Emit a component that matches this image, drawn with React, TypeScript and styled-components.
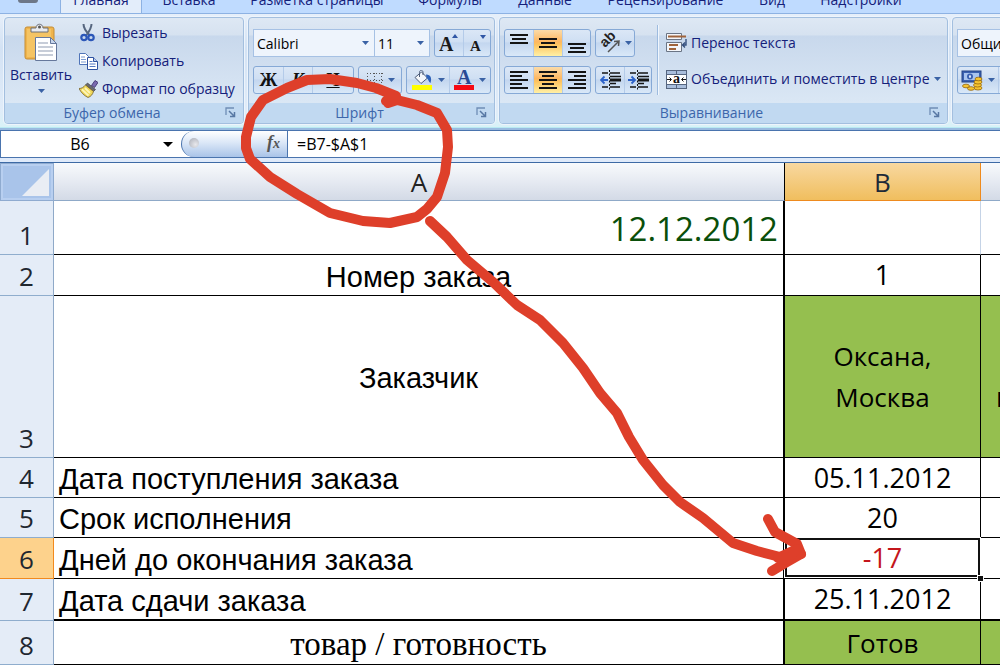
import React from "react";
import styled, { createGlobalStyle, css } from "styled-components";

const UI_FONT = '"Open Sans", "Noto Sans", sans-serif';

const GlobalStyle = createGlobalStyle`
  *, *::before, *::after { box-sizing: border-box; }
  html, body, #root { height: 100%; }
  body {
    margin: 0;
    background: #fff;
    font-family: ${UI_FONT};
    font-size: 14px;
    color: #14207a;
  }
  button, input, select { font: inherit; color: inherit; margin: 0; }
`;

const Window = styled.div`
  position: relative;
  min-height: 100%;
  overflow: hidden;
`;

/* ---------- Tabs ---------- */

const TabBar = styled.nav`
  display: flex;
  align-items: flex-end;
  height: 14px;
  padding-left: 18px;
  overflow: hidden;
  background: #bfdbff;
  border-bottom: 1px solid #8db2e3;
`;

const OfficeButton = styled.button`
  align-self: flex-start;
  width: 20px;
  height: 3px;
  padding: 0;
  border: 0;
  border-radius: 0 0 10px 10px;
  background: #6d7788;
`;

const Tab = styled.button<{ $active?: boolean; $width: number }>`
  width: ${(p) => p.$width}px;
  height: 24px;
  margin-bottom: -1px;
  padding: 0 0 5px;
  border: 1px solid transparent;
  border-bottom: 0;
  background: transparent;
  line-height: 18px;
  white-space: nowrap;
  ${(p) =>
    p.$active &&
    css`
      margin-left: 22px;
      background: #e3edfa;
      border-color: #8db2e3;
    `}
`;

/* ---------- Ribbon ---------- */

const Ribbon = styled.div`
  display: flex;
  gap: 4px;
  height: 114px;
  padding: 3px 0 3px 4px;
  overflow: hidden;
  background: linear-gradient(#e6effa, #d3e2f4 30%, #e0ecf9 85%, #d8f2f7);
  border-bottom: 1px solid #b9eaf2;
`;

const Group = styled.section<{ $width: number }>`
  display: flex;
  flex-direction: column;
  flex: none;
  width: ${(p) => p.$width}px;
  border: 1px solid #a3bfdf;
  border-radius: 4px;
  overflow: hidden;
  box-shadow: 0 0 0 1px #edf4fc;
  background: linear-gradient(#dee8f4 0, #d6e2f0 17px, #c8d8ec 18px, #d9e6f4 80px, #dfecf8 100%);
`;

const GroupBody = styled.div<{ $pad: string }>`
  display: flex;
  flex: 1;
  min-height: 0;
  padding: ${(p) => p.$pad};
`;

const GroupFooter = styled.div`
  display: grid;
  grid-template-columns: 1fr 24px;
  align-items: center;
  height: 20px;
  background: #c1d9f1;
  color: #3c66ab;
  line-height: 18px;
`;

const GroupTitle = styled.h2`
  margin: 0;
  font-size: 14px;
  font-weight: 400;
  text-align: center;
`;

const Launcher = styled.button`
  justify-self: center;
  width: 12px;
  height: 16px;
  padding: 0;
  border: 0;
  background: none;
  svg { display: block; }
`;

const PasteButton = styled.button`
  display: flex;
  flex-direction: column;
  align-items: center;
  width: 68px;
  margin-right: 4px;
  padding: 0;
  border: 0;
  background: none;
  line-height: 18px;
  svg + span { margin-top: 4px; }
  span + svg { margin-top: 5px; }
`;

const CommandList = styled.div<{ $gap: number; $drop?: boolean }>`
  display: flex;
  flex-direction: column;
  gap: ${(p) => p.$gap}px;
  padding-top: ${(p) => (p.$drop ? 4 : 0)}px;
`;

const Command = styled.button`
  display: flex;
  align-items: center;
  gap: 4px;
  height: 20px;
  padding: 0;
  border: 0;
  background: none;
  line-height: 20px;
  white-space: nowrap;
`;

const Rows = styled.div`
  display: flex;
  flex-direction: column;
  gap: 9px;
`;

const Row = styled.div`
  display: flex;
  gap: 4px;
`;

const SelectBox = styled.label<{ $width: number }>`
  display: grid;
  align-items: center;
  width: ${(p) => p.$width}px;
  height: 28px;
  border: 1px solid #a6c1e4;
  background: #eef4fc;
  & + & { margin-left: -5px; }
  select {
    grid-area: 1 / 1;
    width: 100%;
    height: 26px;
    padding: 0 3px;
    border: 0;
    background: transparent;
    appearance: none;
    color: #000;
  }
  svg {
    grid-area: 1 / 1;
    justify-self: end;
    margin-right: 5px;
    pointer-events: none;
  }
`;

const Cluster = styled.div`
  display: flex;
  height: 28px;
  border: 1px solid #86a9d6;
  border-radius: 3px;
  overflow: hidden;
  background: linear-gradient(#dbe7f6, #cfdff3 45%, #c3d6ef 50%, #d9e8f8);
`;

const Tool = styled.button<{ $width: number; $on?: boolean }>`
  display: flex;
  align-items: center;
  justify-content: center;
  gap: 5px;
  width: ${(p) => p.$width}px;
  padding: 0;
  border: 0;
  border-left: 1px solid #b4cbe9;
  background: ${(p) =>
    p.$on ? "linear-gradient(#fbdba8, #fdb761 45%, #fdc35f 55%, #fff0a6)" : "transparent"};
  &:first-child { border-left: 0; }
`;

const Letter = styled.span<{ $italic?: boolean; $underline?: boolean }>`
  font-family: "Liberation Serif", serif;
  font-size: 18px;
  font-weight: 700;
  line-height: 22px;
  color: #111;
  font-style: ${(p) => (p.$italic ? "italic" : "normal")};
  text-decoration: ${(p) => (p.$underline ? "underline" : "none")};
`;

const Divider = styled.div`
  width: 2px;
  height: 70px;
  margin: -4px 7px 0 5px;
  background: #9dbbdf;
  border-right: 1px solid #f0f6fd;
`;

/* ---------- Formula bar ---------- */

const FormulaBar = styled.div`
  display: flex;
  height: 35px;
  padding-bottom: 4px;
  background: #dfeafa;
  border-top: 2px solid #9bbbe0;
  border-bottom: 1px solid #3d6aa5;
`;

const FormulaRow = styled.div`
  display: flex;
  flex: 1;
  border-top: 1px solid #4a74ae;
  border-bottom: 1px solid #4a74ae;
  border-left: 1px solid #4a74ae;
  background: #fff;
  color: #000;
  font-size: 16px;
  input {
    border: 0;
    padding: 0;
    background: transparent;
    outline: 0;
  }
`;

const NameBox = styled.div`
  display: flex;
  width: 180px;
  input { width: 158px; text-align: center; }
  button {
    display: flex;
    align-items: center;
    justify-content: center;
    width: 18px;
    padding: 0;
    border: 0;
    background: none;
  }
`;

const FxCapsule = styled.div`
  display: flex;
  align-items: center;
  justify-content: space-between;
  width: 107px;
  padding: 0 5px;
  border-left: 1px solid #4a74ae;
  border-right: 1px solid #4a74ae;
  border-radius: 13px 0 0 13px;
  background: linear-gradient(#fff, #dbe7f7 45%, #a9c3e8);
  button {
    padding: 0 2px 2px;
    border: 0;
    background: none;
    font: italic 700 18px/20px "Liberation Serif", serif;
    color: #555;
  }
  small { font-size: 14px; }
`;

const Knob = styled.span`
  width: 10px;
  height: 10px;
  margin: 0 0 3px 2px;
  border-radius: 50%;
  background: radial-gradient(circle at 65% 65%, #e8e8ec, #a7abb5);
`;

const FormulaInput = styled.input`
  flex: 1;
  min-width: 0;
  && { padding-left: 9px; }
`;

/* ---------- Sheet ---------- */

const Sheet = styled.table`
  width: 100%;
  table-layout: fixed;
  border-collapse: separate;
  border-spacing: 0;
  color: #000;
  font-size: 27px;
  th, td { padding: 0; font-weight: 400; overflow: hidden; white-space: nowrap; }
`;

const ColHead = styled.th<{ $selected?: boolean; $edge?: boolean }>`
  height: 38px;
  line-height: 36px;
  color: #222;
  font-size: 26px;
  background: linear-gradient(#f8fafc, #e6eaf2 50%, #d3dae6);
  border-bottom: 1px solid #8fa9c8;
  ${(p) => p.$edge && css`border-right: 1px solid #000;`}
  ${(p) =>
    p.$selected &&
    css`
      background: linear-gradient(#f8d8a0, #f0be5e);
      color: #1d2a38;
      border-bottom-color: #ee8a1e;
      border-right: 1px solid #ee8a1e;
    `}
`;

const Corner = styled.th`
  background: #a9c4ea;
  border: 1px solid #8fabd0;
  box-shadow: inset 0 0 0 2px #b8cff0;
  svg { display: block; margin-left: auto; margin-right: 4px; }
`;

const RowHead = styled.th<{ $selected?: boolean }>`
  vertical-align: bottom;
  line-height: 38px;
  font-size: 26px;
  color: #1f2730;
  background: ${(p) => (p.$selected ? "#fdd28c" : "#e4ecf7")};
  border-right: 1px solid ${(p) => (p.$selected ? "#f28a1e" : "#8fa9c8")};
  border-bottom: 1px solid ${(p) => (p.$selected ? "#f28a1e" : "#8fadcd")};
`;

const SheetRow = styled.tr<{ $height: number }>`
  height: ${(p) => p.$height}px;
`;

const cellBorder = css<{ $thick?: boolean }>`
  border-bottom: ${(p) => (p.$thick ? 2 : 1)}px solid #000;
`;

const CellA = styled.td<{ $kind?: "date" | "center" | "serif"; $thick?: boolean }>`
  ${cellBorder}
  border-right: 2px solid #000;
  && { padding: 3px 5px 0; }
  font-family: "Liberation Sans", sans-serif;
  font-size: 29px;
  line-height: 36px;
  ${(p) => (p.$kind === "center" || p.$kind === "serif") && css`text-align: center;`}
  ${(p) => p.$kind === "serif" && css`font-family: "Liberation Serif", serif; font-size: 33px;`}
  ${(p) =>
    p.$kind === "date" &&
    css`
      text-align: right;
      font-family: ${UI_FONT};
      font-size: 33px;
      color: #0a4f0a;
    `}
`;

const CellB = styled.td<{ $green?: boolean; $open?: boolean; $active?: boolean; $thick?: boolean }>`
  ${cellBorder}
  border-right: 1px solid ${(p) => (p.$open ? "#c5d3e6" : "#000")};
  background: ${(p) => (p.$green ? "#95bf4f" : "#fff")};
  font-size: ${(p) => (p.$green ? 26 : 27)}px;
  text-align: center;
  line-height: 38px;
  && { white-space: pre-line; }
  ${(p) =>
    p.$active &&
    css`
      && { overflow: visible; }
      position: relative;
      color: #c4161c;
      &::before {
        content: "";
        position: absolute;
        inset: 0 0 1px 0;
        border: 2px solid #111;
        outline: 1px solid #fff;
      }
      &::after {
        content: "";
        position: absolute;
        right: -4px;
        bottom: -4px;
        width: 7px;
        height: 7px;
        border: 1px solid #fff;
        background: #111;
      }
    `}
`;

const CellC = styled.td<{ $green?: boolean; $thick?: boolean }>`
  ${cellBorder}
  background: ${(p) => (p.$green ? "#95bf4f" : "#fff")};
  && { padding-left: 15px; white-space: pre; }
  line-height: 40px;
`;

const Multiline = styled.span`
  display: block;
  line-height: 41px;
`;

const Markup = styled.svg`
  position: absolute;
  left: 0;
  top: 0;
  pointer-events: none;
`;

/* ---------- Icons ---------- */

const Caret = ({ color = "#3a62a5", size = 7 }: { color?: string; size?: number }) => (
  <svg width={size} height={Math.ceil(size / 2)} viewBox="0 0 8 4" preserveAspectRatio="none" aria-hidden="true">
    <path d="M0 0h8L4 4z" fill={color} />
  </svg>
);

const LauncherIcon = () => (
  <svg width="11" height="12" viewBox="0 0 11 12" aria-hidden="true">
    <path d="M1 8V1h8" fill="none" stroke="#6f8db5" strokeWidth="1.3" />
    <path d="M4 4l5 5M9.5 5v4.5H5" fill="none" stroke="#5878a4" strokeWidth="1.5" />
  </svg>
);

const PasteIcon = () => (
  <svg width="34" height="39" viewBox="0 0 34 39" aria-hidden="true">
    <rect x="1" y="4" width="29" height="32" rx="2" fill="#efb44d" stroke="#c58d35" />
    <path d="M3 6h24v28H3z" fill="#f5c464" />
    <path d="M7 9V5h5c0-5 7-5 7 0h5v4z" fill="#e9ebef" stroke="#6b6f78" />
    <circle cx="15.5" cy="4" r="1.5" fill="#555" />
    <path d="M11.500 14.500h15l6 6v17h-21z" fill="#fff" stroke="#66789c" />
    <path d="M26.500 14.500v6h6z" fill="#c9d7ec" stroke="#66789c" />
    <path d="M14 20h10M14 24h15M14 28h15M14 32h15" stroke="#b5bdcb" strokeWidth="1.500" />
  </svg>
);

const CutIcon = () => (
  <svg width="19" height="18" viewBox="0 0 19 18" aria-hidden="true">
    <path d="M4.500 0c0 4 3 8 6 11M12.500 0c0 4-2 7-5 11" fill="none" stroke="#56667f" strokeWidth="2" />
    <ellipse cx="5" cy="13.500" rx="2.700" ry="2.700" fill="none" stroke="#2c57b8" strokeWidth="2.200" />
    <ellipse cx="12" cy="13.500" rx="2.700" ry="2.700" fill="none" stroke="#2c57b8" strokeWidth="2.200" />
  </svg>
);

const CopyIcon = () => (
  <svg width="19" height="18" viewBox="0 0 19 18" aria-hidden="true">
    <path d="M.5 1.500h6l3 3v8h-9z" fill="#fff" stroke="#4f74b8" />
    <path d="M2 5h4M2 7.500h5M2 10h5" stroke="#7b9bd1" />
    <path d="M8.500 5.500h6l4 4v8h-10z" fill="#fff" stroke="#2e52a0" />
    <path d="M14.500 5.500v4h4" fill="#bdd0ef" stroke="#2e52a0" />
    <path d="M10.500 9.500h3M10.500 12h6M10.500 14.500h6" stroke="#5278c2" />
  </svg>
);

const BrushIcon = () => (
  <svg width="19" height="18" viewBox="0 0 19 18" aria-hidden="true">
    <path d="M12.500 5.500l3.500-5 3 2-3.500 5z" fill="#7b6bb0" stroke="#4a3f7a" />
    <path d="M8.500 3l8 6.500-2 2-8-6.500z" fill="#6a6a70" stroke="#333" strokeWidth=".6" />
    <path d="M6.500 5C4.500 7.500 2.500 8.500 0 8.500c2 4 5 7 9 9 3-1 4.500-3 5.500-6z" fill="#efd75a" stroke="#75602a" strokeWidth=".8" />
    <path d="M3 9.500l6.500 6M6 8l5 5" stroke="#fdf5b8" strokeWidth="1.800" />
  </svg>
);

const GrowFont = ({ small }: { small?: boolean }) => (
  <svg width="20" height="22" viewBox="0 0 20 22" aria-hidden="true">
    <text
      x={small ? 3 : 0}
      y="19"
      fontFamily="Liberation Serif, serif"
      fontWeight="700"
      fontSize={small ? 15 : 20}
      fill="#1a1a1a"
    >
      A
    </text>
    <path d={small ? "M13 3h6l-3 4z" : "M13 6h6l-3-4z"} fill="#2f56a5" />
  </svg>
);

const BorderIcon = () => (
  <svg width="17" height="17" viewBox="0 0 17 17" aria-hidden="true">
    <path d="M1 1.500h16M1 8.500h16M1.500 1v15M8.500 1v15M15.500 1v15" stroke="#555" strokeDasharray="1 2" />
    <path d="M0 15.500h17" stroke="#222" strokeWidth="1.500" />
  </svg>
);

const FillIcon = () => (
  <svg width="21" height="20" viewBox="0 0 21 20" aria-hidden="true">
    <path d="M3 7.500L9.500 2l6 6-6.500 5.500z" fill="#f4f7fb" stroke="#4d5d7a" />
    <path d="M7.500 7V2.500C7.500-.5 11-.5 11 2.500V5" fill="none" stroke="#4d5d7a" />
    <path d="M14 4.500c5 0 6 4 4.500 8.500-2-1-2-4-4-5z" fill="#2f62b8" />
    <path d="M0 15h20v5H0z" fill="#ffff00" />
  </svg>
);

const FontColorIcon = () => (
  <svg width="20" height="20" viewBox="0 0 20 20" aria-hidden="true">
    <text x="3" y="14" fontFamily="Liberation Serif, serif" fontWeight="700" fontSize="20" fill="#2a4a94">
      A
    </text>
    <path d="M0 15h20v5H0z" fill="#f50a14" />
  </svg>
);

const LineIcon = ({ rows }: { rows: [number, number, number][] }) => (
  <svg width="20" height="20" viewBox="0 0 20 20" aria-hidden="true">
    {rows.map(([x, y, w]) => (
      <rect key={y} x={x} y={y} width={w} height="2" fill="#141414" />
    ))}
  </svg>
);

const spread = (start: number): [number, number, number][] => [
  [1, start, 18],
  [3, start + 4, 14],
  [1, start + 8, 18],
];

const five = (x: number): [number, number, number][] =>
  [0, 1, 2, 3, 4].map((i) => [i % 2 ? x : 1, 1 + i * 4, i % 2 ? 12 : 18] as [number, number, number]);

const OrientIcon = () => (
  <svg width="21" height="22" viewBox="0 0 21 22" aria-hidden="true">
    <text
      x="0"
      y="0"
      transform="translate(6 16) rotate(-45)"
      fontFamily="Liberation Sans, sans-serif"
      fontWeight="700"
      fontSize="14"
      fill="#222"
    >
      ab
    </text>
    <path d="M9 20L19 10M15 9.500l5-.5-.5 5" fill="none" stroke="#555" strokeWidth="1.500" />
  </svg>
);

const IndentIcon = ({ right }: { right?: boolean }) => (
  <svg width="21" height="20" viewBox="0 0 21 20" aria-hidden="true">
    <path d="M2 3h6M10 3h10M10 6.500h11M10 13.500h6M2 17h6M10 17h10" stroke="#141414" strokeWidth="1.600" />
    <path d="M10 10h11" stroke="#141414" strokeWidth="3" />
    <path d="M9.500 0v20" stroke="#141414" strokeDasharray="2 1.500" />
    <path
      d={right ? "M0 10h6M3.500 6.500L7 10l-3.500 3.500" : "M8 10H2M4.500 6.500L1 10l3.500 3.500"}
      fill="none"
      stroke="#2d62c8"
      strokeWidth="1.800"
    />
  </svg>
);

const WrapIcon = () => (
  <svg width="21" height="20" viewBox="0 0 21 20" aria-hidden="true">
    <path d="M.5.5h15v6H.5zM.5 9.500h15v9H.5z" fill="#f4f6fa" stroke="#6a7484" />
    <path d="M2 3.500h18" stroke="#a0643c" strokeWidth="2" />
    <path d="M3 12h9M3 16h7" stroke="#a0643c" strokeWidth="2" />
    <path d="M20 6v6h-3M19 9.500L16.500 12l2.500 2.500" fill="none" stroke="#35507e" strokeWidth="1.400" />
  </svg>
);

const MergeIcon = () => (
  <svg width="21" height="19" viewBox="0 0 21 19" aria-hidden="true">
    <rect x=".5" y=".5" width="20" height="18" fill="#a9bedc" stroke="#55657f" />
    <path d="M1 5h19v9H1z" fill="#fff" />
    <path d="M0 4.500h21M0 14.500h21M10.500 0v4M10.500 15v4" stroke="#55657f" />
    <text x="7" y="13" fontFamily="Liberation Serif, serif" fontWeight="700" fontSize="14" fill="#111">
      a
    </text>
    <path d="M1 9.500h4M16 9.500h4M3.500 7.500l2 2-2 2M17.500 7.500l-2 2 2 2" fill="none" stroke="#111" />
  </svg>
);

const MoneyIcon = () => (
  <svg width="22" height="21" viewBox="0 0 22 21" aria-hidden="true">
    <rect x="1" y="1" width="19" height="11" fill="#3b61b0" stroke="#244486" />
    <rect x="3" y="3" width="15" height="7" fill="#a9c4ee" />
    <ellipse cx="9" cy="6.500" rx="3" ry="3" fill="#3b61b0" />
    <ellipse cx="9" cy="6.500" rx="1" ry="1.500" fill="#dfeafc" />
    <g fill="#f5c431" stroke="#96660c" strokeWidth=".8">
      <ellipse cx="17" cy="18" rx="4" ry="2" />
      <ellipse cx="16.500" cy="15" rx="4" ry="2" />
      <ellipse cx="17" cy="12" rx="4" ry="2" />
      <ellipse cx="17.500" cy="9" rx="3.500" ry="1.800" />
      <ellipse cx="5" cy="16" rx="3.500" ry="1.800" />
      <ellipse cx="10" cy="18.500" rx="3.500" ry="1.800" />
    </g>
  </svg>
);

/* ---------- Page ---------- */

const TABS = [
  { label: "Главная", width: 82, active: true },
  { label: "Вставка", width: 94 },
  { label: "Разметка страницы", width: 162 },
  { label: "Формулы", width: 104 },
  { label: "Данные", width: 86 },
  { label: "Рецензирование", width: 155 },
  { label: "Вид", width: 58 },
  { label: "Надстройки", width: 120 },
];

type SheetLine = {
  height: number;
  a: string;
  kind?: "date" | "center" | "serif";
  b: string;
  c?: string;
  green?: boolean;
  active?: boolean;
  thick?: boolean;
};

const LINES: SheetLine[] = [
  { height: 54, a: "12.12.2012", kind: "date", b: "" },
  { height: 41, a: "Номер заказа", kind: "center", b: "1" },
  { height: 162, a: "Заказчик", kind: "center", b: "Оксана,\nМосква", c: " \nн", green: true },
  { height: 40, a: "Дата поступления заказа", b: "05.11.2012" },
  { height: 40, a: "Срок исполнения", b: "20" },
  { height: 41, a: "Дней до окончания заказа", b: "-17", active: true },
  { height: 42, a: "Дата сдачи заказа", b: "25.11.2012", thick: true },
  { height: 44, a: "товар / готовность", kind: "serif", b: "Готов", green: true },
];

const Footer = ({ title, launcher = true }: { title: string; launcher?: boolean }) => (
  <GroupFooter>
    <GroupTitle>{title}</GroupTitle>
    {launcher && (
      <Launcher aria-label={`${title}: параметры`}>
        <LauncherIcon />
      </Launcher>
    )}
  </GroupFooter>
);

const Dropdown = ({ label, value, width }: { label: string; value: string; width: number }) => (
  <SelectBox $width={width}>
    <select aria-label={label} defaultValue={value}>
      <option>{value}</option>
    </select>
    <Caret />
  </SelectBox>
);

export default function App() {
  return (
    <Window>
      <GlobalStyle />
      <TabBar>
        <OfficeButton aria-label="Office" />
        {TABS.map((t) => (
          <Tab key={t.label} $width={t.width} $active={t.active}>
            {t.label}
          </Tab>
        ))}
      </TabBar>

      <Ribbon>
        <Group $width={240}>
          <GroupBody $pad="5px 0 0 2px">
            <PasteButton>
              <PasteIcon />
              <span>Вставить</span>
              <Caret />
            </PasteButton>
            <CommandList $gap={8}>
              <Command>
                <CutIcon />
                Вырезать
              </Command>
              <Command>
                <CopyIcon />
                Копировать
              </Command>
              <Command>
                <BrushIcon />
                Формат по образцу
              </Command>
            </CommandList>
          </GroupBody>
          <Footer title="Буфер обмена" />
        </Group>

        <Group $width={247}>
          <GroupBody $pad="11px 0 0 4px">
            <Rows>
              <Row>
                <Dropdown label="Шрифт" value="Calibri" width={122} />
                <Dropdown label="Размер" value="11" width={56} />
                <Cluster>
                  <Tool $width={28} aria-label="Увеличить размер"><GrowFont /></Tool>
                  <Tool $width={27} aria-label="Уменьшить размер"><GrowFont small /></Tool>
                </Cluster>
              </Row>
              <Row>
                <Cluster>
                  <Tool $width={29}><Letter>Ж</Letter></Tool>
                  <Tool $width={29}><Letter $italic>К</Letter></Tool>
                  <Tool $width={41}><Letter $underline>Ч</Letter></Tool>
                </Cluster>
                <Cluster>
                  <Tool $width={42} aria-label="Границы"><BorderIcon /><Caret /></Tool>
                </Cluster>
                <Cluster>
                  <Tool $width={42} aria-label="Цвет заливки"><FillIcon /><Caret /></Tool>
                  <Tool $width={41} aria-label="Цвет текста"><FontColorIcon /><Caret /></Tool>
                </Cluster>
              </Row>
            </Rows>
          </GroupBody>
          <Footer title="Шрифт" />
        </Group>

        <Group $width={449}>
          <GroupBody $pad="11px 0 0 4px">
            <Rows>
              <Row>
                <Cluster>
                  <Tool $width={28} aria-label="По верхнему краю"><LineIcon rows={spread(1)} /></Tool>
                  <Tool $width={29} $on aria-label="По середине"><LineIcon rows={spread(5)} /></Tool>
                  <Tool $width={28} aria-label="По нижнему краю"><LineIcon rows={spread(10)} /></Tool>
                </Cluster>
                <Cluster>
                  <Tool $width={38} aria-label="Ориентация"><OrientIcon /><Caret /></Tool>
                </Cluster>
              </Row>
              <Row>
                <Cluster>
                  <Tool $width={28} aria-label="По левому краю"><LineIcon rows={five(1)} /></Tool>
                  <Tool $width={29} $on aria-label="По центру"><LineIcon rows={five(4)} /></Tool>
                  <Tool $width={28} aria-label="По правому краю"><LineIcon rows={five(7)} /></Tool>
                </Cluster>
                <Cluster>
                  <Tool $width={28} aria-label="Уменьшить отступ"><IndentIcon /></Tool>
                  <Tool $width={27} aria-label="Увеличить отступ"><IndentIcon right /></Tool>
                </Cluster>
              </Row>
            </Rows>
            <Divider />
            <CommandList $gap={16} $drop>
              <Command>
                <WrapIcon />
                Перенос текста
              </Command>
              <Command>
                <MergeIcon />
                Объединить и поместить в центре
                <Caret />
              </Command>
            </CommandList>
          </GroupBody>
          <Footer title="Выравнивание" />
        </Group>

        <Group $width={200}>
          <GroupBody $pad="11px 0 0 4px">
            <Rows>
              <Dropdown label="Числовой формат" value="Общий" width={160} />
              <Row>
                <Cluster>
                  <Tool $width={40} aria-label="Финансовый формат"><MoneyIcon /><Caret /></Tool>
                  <Tool $width={30}>%</Tool>
                </Cluster>
              </Row>
            </Rows>
          </GroupBody>
          <Footer title="" launcher={false} />
        </Group>
      </Ribbon>

      <FormulaBar>
        <FormulaRow>
          <NameBox>
            <input aria-label="Имя" defaultValue="B6" />
            <button aria-label="Список имён"><Caret color="#000" size={10} /></button>
          </NameBox>
          <FxCapsule>
            <Knob />
            <button aria-label="Вставить функцию">f<small>x</small></button>
          </FxCapsule>
          <FormulaInput aria-label="Строка формул" defaultValue="=B7-$A$1" />
        </FormulaRow>
      </FormulaBar>

      <Sheet>
        <colgroup>
          <col style={{ width: 54 }} />
          <col style={{ width: 731 }} />
          <col style={{ width: 196 }} />
          <col />
        </colgroup>
        <thead>
          <tr>
            <Corner aria-label="Выделить всё">
              <svg width="27" height="27" viewBox="0 0 27 27" aria-hidden="true">
                <path d="M27 0v27H0z" fill="#e9edf4" />
              </svg>
            </Corner>
            <ColHead $edge>A</ColHead>
            <ColHead $selected>B</ColHead>
            <ColHead />
          </tr>
        </thead>
        <tbody>
          {LINES.map((line, i) => (
            <SheetRow key={i} $height={line.height}>
              <RowHead scope="row" $selected={line.active}>{i + 1}</RowHead>
              <CellA $kind={line.kind} $thick={line.thick}>{line.a}</CellA>
              <CellB $green={line.green} $open={i === 0} $active={line.active} $thick={line.thick}>
                {line.b.includes("\n") ? <Multiline>{line.b}</Multiline> : line.b}
              </CellB>
              <CellC $green={line.green} $thick={line.thick}>{line.c}</CellC>
            </SheetRow>
          ))}
        </tbody>
      </Sheet>

      <Markup width="820" height="600" viewBox="0 0 820 600" aria-hidden="true">
        <g fill="none" stroke="#de3f2a" strokeWidth="10" strokeLinecap="round" strokeLinejoin="round">
          <path d="M386 101L396 96L376 88L357 83L330 79L307 80L287 88L263 100L251 117L246 137V148L250 159L270 177L297 194L330 213L363 221L390 223L417 217L427 209L437 197L445 173L448 147L447 130L437 113L417 105L397 100L388 103" />
          <path d="M430 221L447 237L467 260L493 282L517 305L540 320L563 343L583 368L600 393L617 413L629 437L643 460L663 485L680 502L703 518L733 543L757 551L780 557L801 554" />
          <path d="M768 519L775 532L797 544L801 554L787 562L772 571" />
          <path d="M778 558L797 549L786 560Z" />
        </g>
      </Markup>
    </Window>
  );
}
